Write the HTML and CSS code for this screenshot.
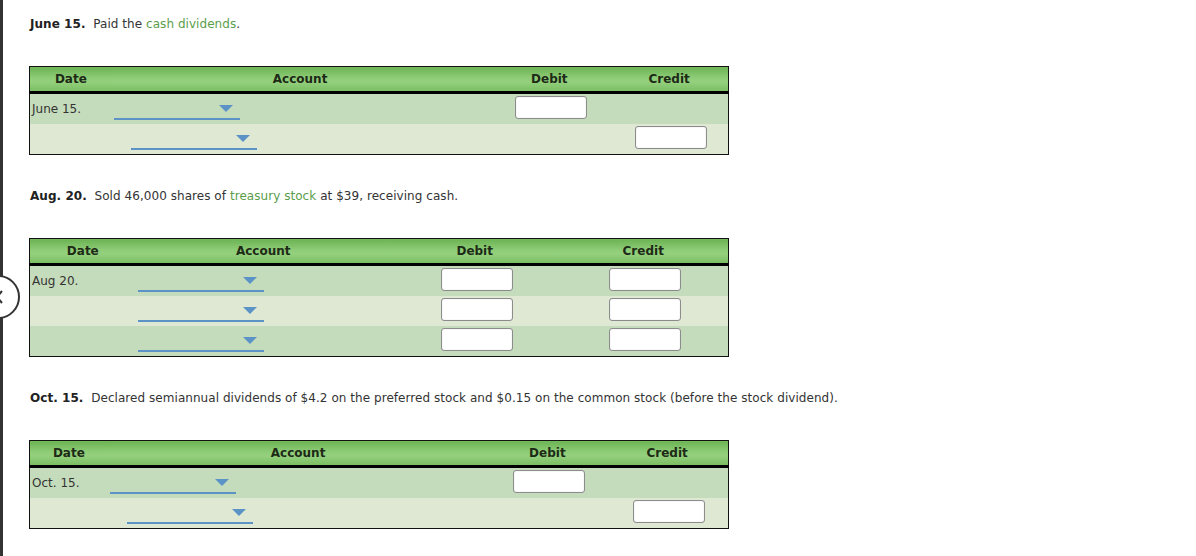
FILE: index.html
```html
<!DOCTYPE html>
<html>
<head>
<meta http-equiv="Content-Type" content="text/html; charset=utf-8"/>
<title>Journal Entries</title>
<link rel="stylesheet" href="styles.css">
</head>
<body>
<div class="page">

<div class="nav-back">
  <svg width="44" height="44" viewBox="0 0 44 44">
    <polyline points="26,16 21,22 26,28" fill="none" stroke="#333" stroke-width="2"/>
  </svg>
</div>

<p class="prompt"><b>June 15.</b>&nbsp; Paid the <span class="term">cash dividends</span>.</p>

<table class="journal j1">
  <tr>
    <th class="c-date">Date</th>
    <th class="c-acct">Account</th>
    <th class="c-debit">Debit</th>
    <th class="c-credit">Credit</th>
  </tr>
  <tr class="odd">
    <td class="date">June 15.</td>
    <td class="acct"><span class="dd"><i></i></span></td>
    <td class="amt"><span class="box"></span></td>
    <td class="amt"></td>
  </tr>
  <tr class="even">
    <td class="date"></td>
    <td class="acct indent"><span class="dd"><i></i></span></td>
    <td class="amt"></td>
    <td class="amt"><span class="box"></span></td>
  </tr>
</table>

<p class="prompt"><b>Aug. 20.</b>&nbsp; Sold 46,000 shares of <span class="term">treasury stock</span> at $39, receiving cash.</p>

<table class="journal j2">
  <tr>
    <th class="c-date">Date</th>
    <th class="c-acct">Account</th>
    <th class="c-debit">Debit</th>
    <th class="c-credit">Credit</th>
  </tr>
  <tr class="odd">
    <td class="date">Aug 20.</td>
    <td class="acct"><span class="dd"><i></i></span></td>
    <td class="amt"><span class="box"></span></td>
    <td class="amt"><span class="box"></span></td>
  </tr>
  <tr class="even">
    <td class="date"></td>
    <td class="acct"><span class="dd"><i></i></span></td>
    <td class="amt"><span class="box"></span></td>
    <td class="amt"><span class="box"></span></td>
  </tr>
  <tr class="odd">
    <td class="date"></td>
    <td class="acct"><span class="dd"><i></i></span></td>
    <td class="amt"><span class="box"></span></td>
    <td class="amt"><span class="box"></span></td>
  </tr>
</table>

<p class="prompt"><b>Oct. 15.</b>&nbsp; Declared semiannual dividends of $4.2 on the preferred stock and $0.15 on the common stock (before the stock dividend).</p>

<table class="journal j3">
  <tr>
    <th class="c-date">Date</th>
    <th class="c-acct">Account</th>
    <th class="c-debit">Debit</th>
    <th class="c-credit">Credit</th>
  </tr>
  <tr class="odd">
    <td class="date">Oct. 15.</td>
    <td class="acct"><span class="dd"><i></i></span></td>
    <td class="amt"><span class="box"></span></td>
    <td class="amt"></td>
  </tr>
  <tr class="even">
    <td class="date"></td>
    <td class="acct indent"><span class="dd"><i></i></span></td>
    <td class="amt"></td>
    <td class="amt"><span class="box"></span></td>
  </tr>
</table>

</div>
</body>
</html>
```

FILE: styles.css
```css
html, body {
  margin: 0;
  background-color: white;
}

body {
  font-family: "DejaVu Sans", Verdana, sans-serif;
  font-size: 12px;
  line-height: 16px;
  color: #333;
}

.page {
  position: relative;
  min-height: 556px;
  box-sizing: border-box;
  border-left: 3px solid #333;
  padding: 16px 0 0 26px;
}

/* round back button, half hidden behind the left edge */
.nav-back {
  position: absolute;
  left: -27px;
  top: 275px;
  width: 44px;
  height: 44px;
  box-sizing: border-box;
  border: 2px solid #333;
  border-radius: 50%;
  background: white;
}

.nav-back svg {
  display: block;
  margin: -2px;
}

.prompt {
  margin: 0 0 34px 1px;
  letter-spacing: 0.05px;
}

.prompt b {
  color: #222;
}

.term {
  color: #5a9e4b;
}

.journal {
  width: 700px;
  border-collapse: collapse;
  border: 1px solid #111;
  margin-bottom: 33px;
}

.journal th {
  height: 24px;
  padding: 0;
  font-weight: bold;
  color: #1d2a16;
  text-align: center;
  border-bottom: 3px solid #000;
  background: linear-gradient(to bottom, #6cb354 0%, #8fcd78 45%, #94d07d 60%, #79bd61 100%);
}

.journal td {
  height: 30px;
  padding: 0;
  vertical-align: top;
}

.journal tr.odd td {
  background-color: #c5dcbc;
}

.journal tr.even td {
  background-color: #dee8d2;
}

.journal td.date {
  height: 23px;
  padding: 7px 0 0 2px;
}

.journal td.acct {
  padding-left: 2px;
}

.journal td.acct.indent {
  padding-left: 19px;
}

.journal td.amt {
  padding-left: 4px;
  text-align: center;
}

/* column widths per entry */
.j1 .c-date { width: 82px; }
.j1 .c-acct { width: 378px; }
.j1 .c-debit { width: 122px; }
.j1 .c-credit { width: 118px; }

.j2 .c-date { width: 106px; }
.j2 .c-acct { width: 256px; }
.j2 .c-debit { width: 168px; }
.j2 .c-credit { width: 170px; }

.j3 .c-date { width: 78px; }
.j3 .c-acct { width: 382px; }
.j3 .c-debit { width: 118px; }
.j3 .c-credit { width: 122px; }

/* account picker */
.dd {
  display: flex;
  justify-content: flex-end;
  align-items: flex-end;
  box-sizing: border-box;
  width: 126px;
  height: 26px;
  padding: 0 7px 6px 0;
  border-bottom: 2px solid #5b93c6;
}

.dd i {
  width: 0;
  height: 0;
  border-left: 7px solid transparent;
  border-right: 7px solid transparent;
  border-top: 7px solid #5b93c6;
}

/* amount field */
.box {
  display: inline-block;
  box-sizing: border-box;
  width: 72px;
  height: 23px;
  margin-top: 2px;
  background: white;
  border: 1px solid #8c8c8c;
  border-radius: 3px;
  box-shadow: inset 0 0 1px #bbb;
  vertical-align: top;
}
```
